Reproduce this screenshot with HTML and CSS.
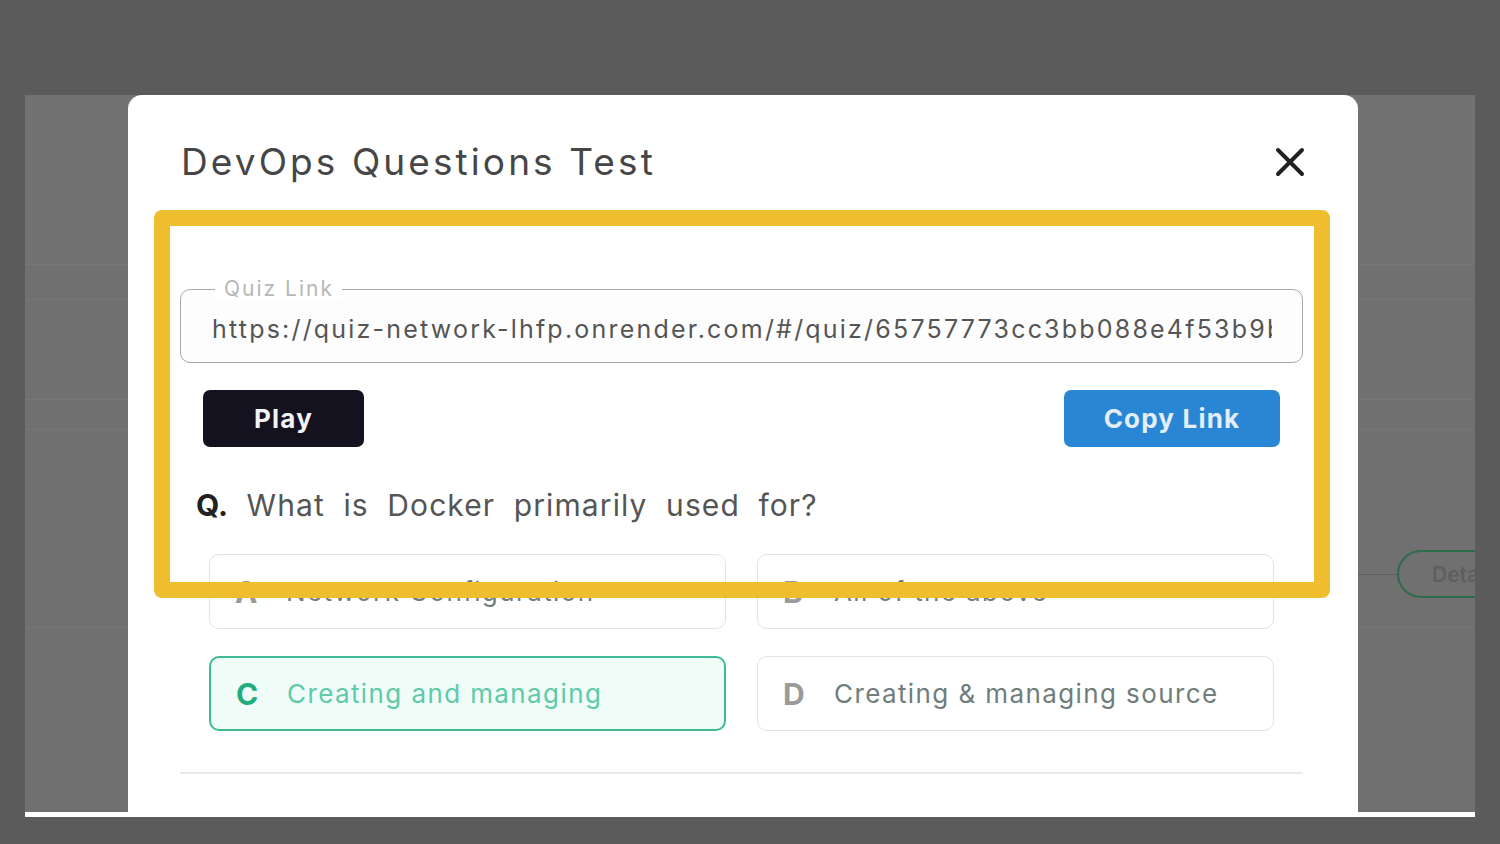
FILE: index.html
```html
<!DOCTYPE html>
<html lang="en">
<head>
<meta charset="utf-8">
<title>DevOps Questions Test</title>
<link rel="stylesheet" href="styles.css">
</head>
<body>
<div class="frame">
  <div class="page">
    <div class="page-top"></div>
    <div class="page-row row-a"></div>
    <div class="page-row row-b"></div>
    <div class="page-row row-c"></div>
    <div class="page-item">
      <span class="item-line"></span>
      <span class="details-btn">Details</span>
    </div>
    <div class="page-row row-d"></div>
  </div>

  <div class="modal">
    <div class="modal-header">
      <h2 class="modal-title">DevOps Questions Test</h2>
      <svg class="close-icon" width="30" height="30" viewBox="0 0 30 30" aria-label="Close">
        <path d="M3 3 L27 27 M27 3 L3 27" stroke="#222" stroke-width="4" stroke-linecap="round"/>
      </svg>
    </div>

    <fieldset class="link-field">
      <legend>Quiz Link</legend>
      <div class="link-value">https://quiz-network-lhfp.onrender.com/#/quiz/65757773cc3bb088e4f53b9b</div>
    </fieldset>

    <div class="btn-row">
      <button class="btn btn-play">Play</button>
      <button class="btn btn-copy">Copy Link</button>
    </div>

    <p class="question"><b>Q.</b> What is Docker primarily used for?</p>

    <div class="options">
      <div class="option"><span class="opt-letter">A</span><span class="opt-text">Network Configuration</span></div>
      <div class="option"><span class="opt-letter">B</span><span class="opt-text">All of the above</span></div>
      <div class="option option-correct"><span class="opt-letter">C</span><span class="opt-text">Creating and managing</span></div>
      <div class="option"><span class="opt-letter">D</span><span class="opt-text">Creating &amp; managing source</span></div>
    </div>

    <div class="divider"></div>
  </div>

  <div class="highlight"></div>
</div>
</body>
</html>
```

FILE: styles.css
```css
* { box-sizing: border-box; }

html, body {
  margin: 0;
  padding: 0;
  background: #5b5b5b;
  font-family: Inter, "Noto Sans", "Liberation Sans", sans-serif;
}

.frame {
  position: relative;
  margin: 95px 0 0 25px;
  width: 1450px;
  height: 722px;
  background: #707070;
  border-bottom: 5px solid #ffffff;
  overflow: hidden;
}

/* dimmed page behind the dialog */
.page {
  display: flex;
  flex-direction: column;
  height: 100%;
}
.page-top {
  height: 170px;
  background: #727272;
  border-bottom: 1px solid #777777;
}
.page-row { border-bottom: 1px solid #777777; flex: none; }
.row-a { height: 35px; }
.row-b { height: 100px; }
.row-c { height: 30px; }
.row-d { height: 30px; }
.page-item {
  flex: none;
  display: flex;
  align-items: center;
  margin-top: 120px;
  height: 48px;
  padding-left: 1333px;
}
.item-line {
  flex: none;
  width: 39px;
  height: 1px;
  background: #5e5e5e;
}
.details-btn {
  flex: none;
  height: 48px;
  padding: 0 30px 0 33px;
  border: 2px solid #2d6b4b;
  border-radius: 24px;
  display: flex;
  align-items: center;
  font-size: 21px;
  font-weight: 600;
  color: #5f5f5f;
}

/* dialog */
.modal {
  position: absolute;
  left: 103px;
  top: 0;
  width: 1230px;
  height: 722px;
  background: #ffffff;
  border-radius: 14px 14px 0 0;
  display: flex;
  flex-direction: column;
  padding: 0 55px 0 52px;
}

.modal-header {
  display: flex;
  align-items: center;
  justify-content: space-between;
  padding: 44px 0 0 1px;
  margin-right: -2px;
}
.modal-title {
  margin: 0;
  font-size: 37px;
  line-height: 46px;
  font-weight: 400;
  color: #464646;
  letter-spacing: 3.1px;
}
.close-icon { display: block; }

.link-field {
  margin: 92px 0 0 0;
  padding: 0 30px 5px 31px;
  border: 1.5px solid #a8a8a8;
  border-radius: 10px;
  background: #fdfdfd;
  min-width: 0;
}
.link-field legend {
  margin-left: 3px;
  padding: 0 8px 0 9px;
  font-size: 21px;
  line-height: 24px;
  color: #b7b7b7;
  letter-spacing: 2px;
  background: #ffffff;
}
.link-value {
  height: 56px;
  line-height: 56px;
  font-size: 25px;
  color: #555555;
  letter-spacing: 2.2px;
  white-space: nowrap;
  overflow: hidden;
}

.btn-row {
  display: flex;
  justify-content: space-between;
  margin-top: 27px;
  padding: 0 23px;
}
.btn {
  height: 57px;
  border: none;
  border-radius: 7px;
  font-family: Inter, "Noto Sans", "Liberation Sans", sans-serif;
  font-size: 26px;
  font-weight: 700;
  letter-spacing: 1.2px;
  cursor: pointer;
}
.btn-play {
  width: 161px;
  background: #14121f;
  color: #f2f2f2;
}
.btn-copy {
  width: 216px;
  background: #2986d5;
  color: #e3eef9;
}

.question {
  margin: 41px 0 0 0;
  padding-left: 16px;
  font-size: 30px;
  line-height: 34px;
  color: #555555;
  letter-spacing: 1.1px;
  word-spacing: 9px;
}
.question b {
  color: #222222;
  font-weight: 700;
  letter-spacing: 0;
  word-spacing: 7px;
}

.options {
  display: grid;
  grid-template-columns: 517px 517px;
  column-gap: 31px;
  row-gap: 27px;
  margin-top: 32px;
  padding: 0 30px 0 29px;
}
.option {
  height: 75px;
  border: 1.5px solid #e2e2e2;
  border-radius: 10px;
  display: flex;
  align-items: center;
  padding-left: 25px;
  background: #ffffff;
}
.opt-letter {
  width: 51px;
  font-size: 30px;
  font-weight: 700;
  color: #9a9a9a;
}
.opt-text {
  font-size: 26px;
  color: #6f7d7b;
  letter-spacing: 1.4px;
}
.option-correct {
  border: 2px solid #3dbb97;
  background: #effcf8;
}
.option-correct .opt-letter { color: #22ad7f; }
.option-correct .opt-text { color: #5ecaa8; }

.divider {
  margin-top: 41px;
  height: 2px;
  background: #e9e9e9;
}

/* annotation overlay */
.highlight {
  position: absolute;
  left: 129px;
  top: 115px;
  width: 1176px;
  height: 388px;
  border: 16px solid #efbe2f;
  border-radius: 8px;
  pointer-events: none;
}
```
